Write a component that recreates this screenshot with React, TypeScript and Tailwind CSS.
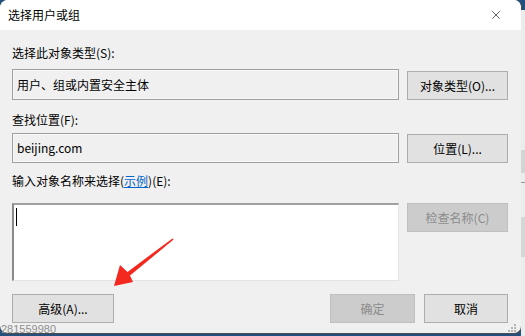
import { X } from "lucide-react";

const font = { fontFamily: '"Noto Sans CJK SC", "Noto Sans", sans-serif' };

type BtnProps = { label: string; disabled?: boolean; className?: string };

const Btn = ({ label, disabled, className }: BtnProps) => (
  <button
    className={`flex items-center justify-center border text-[12px] leading-4 ${
      disabled
        ? "bg-[#cccccc] border-[#bfbfbf] text-[#8b8b8b]"
        : "bg-[#e1e1e1] border-[#adadad] text-black"
    } ${className ?? ""}`}
  >
    {label}
  </button>
);

const App = () => {
  return (
    <div className="relative w-[525px] h-[336px] overflow-hidden bg-[#23507c]" style={font}>
      {/* right strip, something behind the dialog */}
      <div className="absolute right-0 top-[10px] w-[4px] h-[326px] bg-[#ececec] flex flex-col">
        <div className="mt-[140px] h-[23px] bg-[#d4d4d4]" />
        <div className="mt-[9px] h-[1px] bg-[#9a9a9a]" />
        <div className="mt-[34px] h-[40px] bg-[#d6d6d6]" />
      </div>

      <div className="w-[522px] h-[334px] rounded-[8px] overflow-hidden border-r border-b border-[#4b4b4b] bg-[#f0f0f0] flex flex-col">
        {/* title bar */}
        <div className="h-[30px] bg-white flex items-center justify-between pl-[8px] pr-[18px]">
          <span className="text-[12px] text-black">选择用户或组</span>
          <X size={14} strokeWidth={1.2} className="text-[#222]" />
        </div>

        {/* body */}
        <div className="flex flex-col pl-[12px] pr-[13px]">
          <div className="mt-[15px] text-[12px] leading-4 text-black">选择此对象类型(S):</div>
          <div className="mt-[8px] flex items-end gap-[8px]">
            <div className="w-[387px] h-[31px] border border-[#a0a0a0] shadow-[inset_0_0_0_1px_#f7f7f7] flex items-center px-[4px] text-[12px] text-black">
              用户、组或内置安全主体
            </div>
            <Btn label="对象类型(O)..." className="w-[101px] h-[29px]" />
          </div>

          <div className="mt-[12px] text-[12px] leading-4 text-black">查找位置(F):</div>
          <div className="mt-[5px] flex items-end gap-[8px]">
            <div className="w-[387px] h-[30px] border border-[#a0a0a0] shadow-[inset_0_0_0_1px_#f7f7f7] flex items-center px-[4px] text-[12px] text-black">
              beijing.com
            </div>
            <Btn label="位置(L)..." className="w-[101px] h-[29px]" />
          </div>

          <div className="mt-[10px] text-[12px] leading-4 text-black">
            输入对象名称来选择(<span className="text-[#0066cc] underline">示例</span>)(E):
          </div>
          <div className="mt-[14px] flex items-start gap-[8px]">
            <div className="w-[387px] h-[78px] bg-white border-t-2 border-l-2 border-t-[#a0a0a0] border-l-[#8a8a8a] border-r border-b border-r-[#e3e3e3] border-b-[#e3e3e3] pl-[2px] pt-[3px]">
              <div className="w-[1px] h-[18px] bg-black" />
            </div>
            <Btn label="检查名称(C)" disabled className="w-[101px] h-[29px]" />
          </div>

          <div className="mt-[13px] flex items-center">
            <Btn label="高级(A)..." className="w-[102px] h-[29px]" />
            <div className="flex-1" />
            <Btn label="确定" disabled className="w-[85px] h-[29px]" />
            <Btn label="取消" className="ml-[9px] w-[84px] h-[29px]" />
          </div>
        </div>
      </div>

      {/* resize grip */}
      <svg className="absolute left-[508px] top-[324px]" width="9" height="9" viewBox="0 0 9 9">
        <rect x="6" y="0" width="2" height="2" fill="#b5b5b5" />
        <rect x="3" y="3" width="2" height="2" fill="#b5b5b5" />
        <rect x="6" y="3" width="2" height="2" fill="#b5b5b5" />
        <rect x="0" y="6" width="2" height="2" fill="#b5b5b5" />
        <rect x="3" y="6" width="2" height="2" fill="#b5b5b5" />
        <rect x="6" y="6" width="2" height="2" fill="#b5b5b5" />
      </svg>

      {/* annotation arrow */}
      <svg className="absolute left-0 top-0 pointer-events-none" width="525" height="336" viewBox="0 0 525 336">
        <polygon
          points="173.6,239.6 172.4,238.4 127.5,272 120,265 114,286 133,282 130,275.5"
          fill="#f3281e"
        />
      </svg>

      {/* watermark */}
      <div
        className="absolute left-[1px] top-[323px] text-[11px] leading-3 text-[#8e8e8e]"
        style={{ fontFamily: '"Liberation Sans", Arial, sans-serif' }}
      >
        281559980
      </div>
    </div>
  );
};

export default App;
